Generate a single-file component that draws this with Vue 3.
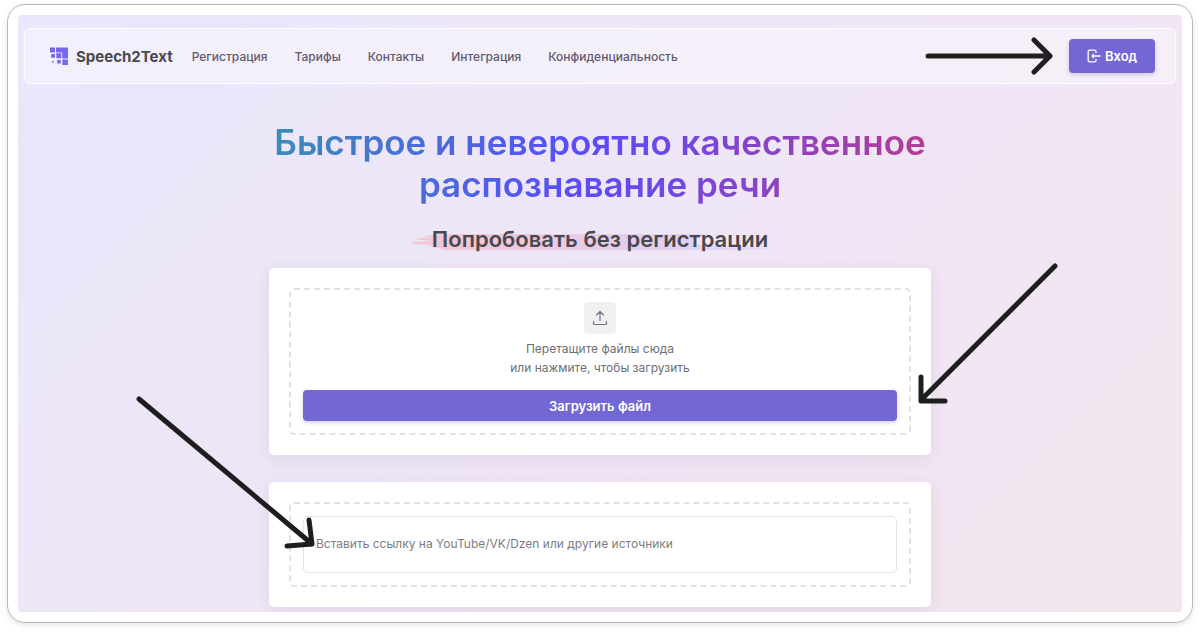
<script setup>
import { ref } from 'vue'

const links = [
  { label: 'Регистрация', href: '#register' },
  { label: 'Тарифы', href: '#pricing' },
  { label: 'Контакты', href: '#contacts' },
  { label: 'Интеграция', href: '#integration' },
  { label: 'Конфиденциальность', href: '#privacy' }
]
const source = ref('')
</script>

<template>
  <div class="frame">
    <div class="page">
      <header class="topbar">
        <a class="brand" href="#home">
          <svg class="logo" viewBox="0 0 18 18" aria-hidden="true">
            <path d="M0 .5h5v5H0zM6 .5h12v5H6zM1.200 7h3.800v3.800H1.200zM6.300 6.300h5v5h-5zM12.200 5H18v6.500h-5.800zM2 14h1.600v1.600H2zM7.200 13h3.600v3.600H7.200zM12.400 12.400H18v5.600h-5.600z" />
          </svg>
          <span>Speech2Text</span>
        </a>
        <nav class="links" aria-label="Меню">
          <a v-for="link in links" :key="link.href" :href="link.href">{{ link.label }}</a>
        </nav>
        <svg class="pointer" viewBox="0 0 128 40" aria-hidden="true">
          <path d="M3 20H125M109 4l16 16-16 16" />
        </svg>
        <button class="button login" type="button">
          <svg class="login-icon" viewBox="0 0 14 14" aria-hidden="true">
            <path d="M9 4V2.600A1.400 1.400 0 0 0 7.600 1.200H2.600A1.400 1.400 0 0 0 1.200 2.600v8.800a1.400 1.400 0 0 0 1.400 1.400h5A1.400 1.400 0 0 0 9 11.400V10M13.500 7H5M7 5 5 7l2 2" />
          </svg>
          Вход
        </button>
      </header>

      <main class="content">
        <h1>Быстрое и невероятно качественное распознавание речи</h1>
        <h2>
          <svg class="brush" viewBox="0 0 360 18" preserveAspectRatio="none" aria-hidden="true">
            <defs>
              <linearGradient id="brush-fill">
                <stop offset="0" stop-color="#f6bccb" />
                <stop offset=".45" stop-color="#e9c5e0" />
                <stop offset=".75" stop-color="#dccbf3" />
                <stop offset="1" stop-color="#e0daf8" />
              </linearGradient>
            </defs>
            <path fill="url(#brush-fill)" opacity=".8" d="M10 3 34 1h260l-14 7 10 5 52 1 18 1-16 2H34l-18-4 8-1-24-1 1-2 20-1L1 6l20-2z" />
          </svg>
          <span>Попробовать без регистрации</span>
        </h2>

        <section class="card">
          <div class="zone">
            <span class="upload-icon">
              <svg viewBox="0 0 16 16" aria-hidden="true">
                <path d="M8 10.500V1.500M4.500 5 8 1.500 11.500 5M1.500 11.500v2a1 1 0 0 0 1 1h11a1 1 0 0 0 1-1v-2" />
              </svg>
            </span>
            <p>Перетащите файлы сюда<br />или нажмите, чтобы загрузить</p>
            <button class="button upload" type="button">Загрузить файл</button>
          </div>
          <svg class="callout callout-upload" viewBox="0 0 142 144" aria-hidden="true">
            <path d="M138 4 4 138M4 115v24h24" />
          </svg>
        </section>

        <section class="card">
          <div class="zone">
            <input
              v-model="source"
              class="source"
              type="text"
              aria-label="Ссылка на источник"
              placeholder="Вставить ссылку на YouTube/VK/Dzen или другие источники"
            />
          </div>
          <svg class="callout callout-source" viewBox="0 0 182 154" aria-hidden="true">
            <path d="M4 4 177 149M174 125l3 24-25 2" />
          </svg>
        </section>
      </main>
    </div>
  </div>
</template>

<style>
body {
  margin: 0;
  background: #fff;
}
</style>

<style scoped>
* {
  box-sizing: border-box;
}
.frame {
  margin: 4px 7px 8px;
  padding: 10px;
  border: 1px solid #b9b9b9;
  border-radius: 18px;
  background: #fff;
  box-shadow: 0 2px 6px rgba(0, 0, 0, 0.1);
  font-family: Inter, "Noto Sans", sans-serif;
}
.page {
  padding: 13px 6px 5px;
  border-radius: 4px;
  background: linear-gradient(135deg, #e9e7fb 0%, #ede6f7 35%, #f1e5f4 68%, #f2e5ed 100%);
  overflow: hidden;
}
.topbar {
  display: flex;
  align-items: center;
  height: 56px;
  padding: 0 20px 0 25px;
  border: 1px solid rgba(255, 255, 255, 0.75);
  border-radius: 6px;
  background: rgba(255, 255, 255, 0.4);
}
.brand {
  display: flex;
  align-items: center;
  gap: 8px;
  color: #49494d;
  font-size: 15px;
  font-weight: 700;
  text-decoration: none;
}
.logo {
  width: 18px;
  height: 18px;
  fill: #7568ef;
}
.links {
  display: flex;
  gap: 27px;
  margin-left: 19px;
}
.links a {
  color: #5f5a70;
  font-size: 12px;
  font-weight: 500;
  text-decoration: none;
}
.pointer {
  width: 128px;
  height: 40px;
  margin-left: auto;
  margin-right: 16px;
}
.pointer path,
.callout path {
  fill: none;
  stroke: #1e1e1e;
  stroke-width: 5;
  stroke-linecap: round;
  stroke-linejoin: round;
}
.button {
  display: flex;
  align-items: center;
  justify-content: center;
  border: 0;
  border-radius: 4px;
  background: #7367d6;
  color: #fff;
  font-family: inherit;
  font-size: 13px;
  font-weight: 600;
  box-shadow: 0 2px 4px rgba(80, 70, 130, 0.22);
}
.login {
  gap: 4px;
  width: 86px;
  height: 34px;
  padding: 0;
}
.login-icon {
  width: 14px;
  height: 14px;
  fill: none;
  stroke: currentColor;
  stroke-width: 1.3;
}
.content {
  display: flex;
  flex-direction: column;
  max-width: 662px;
  margin: 0 auto;
}
h1 {
  margin: 37px 0 0;
  background: linear-gradient(100deg, #3b8db4 0%, #5a4bff 47%, #6b48ea 58%, #b83c8c 100%);
  background-clip: text;
  -webkit-background-clip: text;
  color: transparent;
  font-size: 35px;
  font-weight: 600;
  line-height: 42px;
  text-align: center;
}
h2 {
  position: relative;
  align-self: center;
  margin: 20px 0 15px;
  color: #49494d;
  font-size: 22px;
  font-weight: 600;
  line-height: 28px;
}
h2 span {
  position: relative;
}
.brush {
  position: absolute;
  left: -20px;
  bottom: 2px;
  width: 360px;
  height: 18px;
}
.card {
  position: relative;
  padding: 20px;
  border-radius: 5px;
  background: #fff;
  box-shadow: 0 4px 16px rgba(90, 60, 130, 0.1);
}
.card + .card {
  margin-top: 27px;
}
.zone {
  display: flex;
  flex-direction: column;
  align-items: center;
  padding: 12px;
  border: 2px dashed #e2e2e4;
  border-radius: 5px;
}
.upload-icon {
  display: grid;
  place-items: center;
  width: 32px;
  height: 32px;
  border-radius: 4px;
  background: #f0f0f1;
}
.upload-icon svg {
  width: 16px;
  height: 16px;
  fill: none;
  stroke: #77738a;
  stroke-width: 1.2;
  stroke-linecap: round;
  stroke-linejoin: round;
}
p {
  margin: 5px 0 13px;
  color: #6e6e73;
  font-size: 12px;
  line-height: 19px;
  text-align: center;
}
.upload {
  width: 100%;
  height: 31px;
}
.source {
  width: 100%;
  height: 57px;
  padding: 0 12px 2px;
  border: 1px solid #e3e3e6;
  border-radius: 5px;
  background: #fff;
  color: #49494d;
  font-family: inherit;
  font-size: 12px;
}
.source::placeholder {
  color: #7d7d81;
  opacity: 1;
}
.callout {
  position: absolute;
  z-index: 1;
  pointer-events: none;
}
.callout-upload {
  right: -128px;
  top: -6px;
  width: 142px;
  height: 144px;
}
.callout-source {
  left: -134px;
  top: -87px;
  width: 182px;
  height: 154px;
}
</style>
